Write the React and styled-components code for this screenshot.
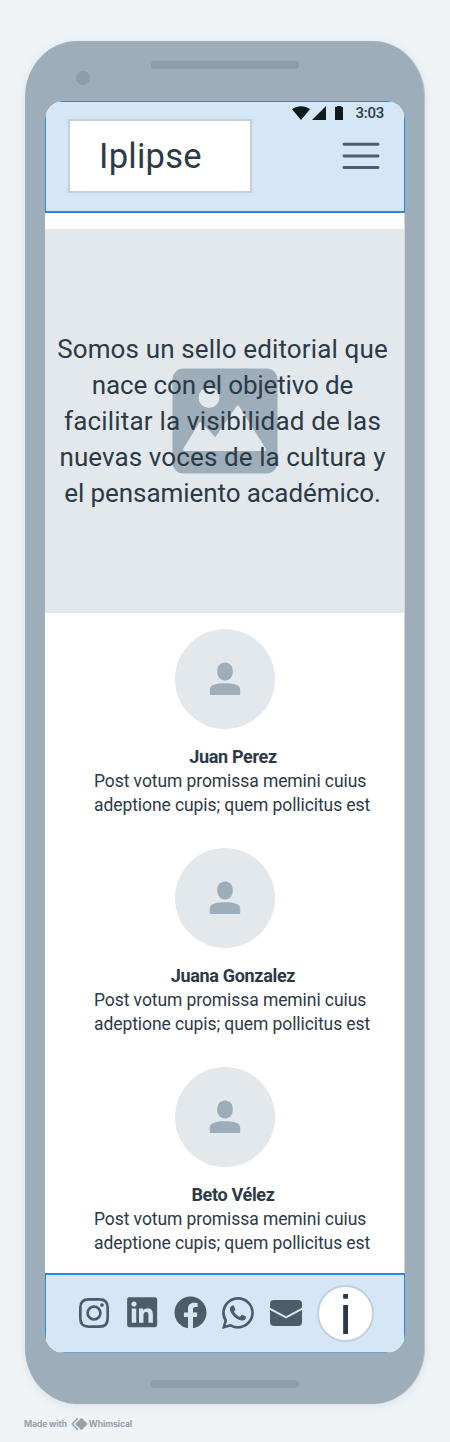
import React from 'react';
import styled, { createGlobalStyle } from 'styled-components';
import { FaLinkedin, FaFacebook } from 'react-icons/fa';
import { BsWhatsapp } from 'react-icons/bs';

const c = {
  page: '#eff3f6',
  device: '#9eadba',
  deviceDark: '#8d9dac',
  bar: '#d5e6f6',
  accent: '#2c88d9',
  line: '#c3cfd9',
  soft: '#e3e8ec',
  icon: '#4b5c6b',
  ink: '#2c3a47',
  status: '#0f1a20',
};

const GlobalStyle = createGlobalStyle`
  *, *::before, *::after { box-sizing: border-box; }
  body {
    margin: 0;
    background: ${c.page};
    color: ${c.ink};
    font-family: Roboto, "Liberation Sans", sans-serif;
  }
  svg { display: block; flex: none; }
`;

const Page = styled.div`
  width: 450px;
  height: 1442px;
  padding: 41px 25px 0;
  overflow: hidden;
`;

const Device = styled.main`
  display: flex;
  flex-direction: column;
  height: 1363px;
  padding: 0 20px;
  border-radius: 52px / 56px;
  background: ${c.device};
  box-shadow: inset -1px 0 rgba(255, 255, 255, 0.25), 0 2px 8px rgba(60, 80, 100, 0.1);
`;

const DeviceTop = styled.div`
  display: grid;
  grid-template-columns: 106px 148px 1fr;
  align-items: start;
  height: 60px;
  padding-top: 20px;
`;

const Camera = styled.span`
  width: 14px;
  height: 14px;
  margin: 10px 0 0 31px;
  border-radius: 50%;
  background: ${c.deviceDark};
`;

const Speaker = styled.span`
  width: 148px;
  height: 8px;
  border-radius: 4px;
  background: ${c.deviceDark};
`;

const DeviceBottom = styled.div`
  display: flex;
  justify-content: center;
  padding-top: 27px;
`;

const Screen = styled.div`
  display: flex;
  flex-direction: column;
  height: 1252px;
  border-radius: 19px;
  overflow: hidden;
  background: #fff;
`;

const Header = styled.header`
  display: flex;
  justify-content: space-between;
  height: 112px;
  padding: 0 20px 0 22px;
  border: 1px solid ${c.accent};
  border-bottom-width: 2px;
  background: ${c.bar};
`;

const Logo = styled.div`
  width: 184px;
  height: 74px;
  margin-top: 17px;
  padding-left: 29px;
  border: 2px solid ${c.line};
  background: #fff;
  font-size: 34.5px;
  line-height: 70px;
  letter-spacing: 0.25px;
`;

const HeaderSide = styled.div`
  display: flex;
  flex-direction: column;
  align-items: flex-end;
`;

const StatusBar = styled.div`
  display: flex;
  align-items: center;
  height: 22px;
  color: ${c.status};
`;

const Clock = styled.time`
  margin-left: 10px;
  color: ${c.ink};
  font-size: 15px;
  font-weight: 500;
  line-height: 22px;
  letter-spacing: -0.25px;
`;

const MenuButton = styled.button`
  margin: 18px 4px 0 0;
  padding: 0;
  border: 0;
  background: none;
  color: ${c.icon};
`;

const Content = styled.div`
  flex: 1;
  padding-top: 16px;
  border-right: 1px solid #d3dae0;
`;

const Hero = styled.section`
  display: grid;
  place-items: center;
  height: 384px;
  background: ${c.soft};
  > * { grid-area: 1 / 1; }
`;

const Headline = styled.p`
  margin: 0 4px 0 0;
  font-size: 26px;
  line-height: 36px;
  text-align: center;
  white-space: nowrap;
`;

const Line = styled.span`
  display: block;
  letter-spacing: ${(p) => p.$track}px;
`;

const People = styled.section`
  display: flex;
  flex-direction: column;
  gap: 31px;
  padding-top: 16px;
`;

const Person = styled.article`
  display: flex;
  flex-direction: column;
`;

const Avatar = styled.div`
  display: grid;
  place-items: center;
  width: 100px;
  height: 100px;
  margin: 0 0 16px 130px;
  padding-right: 1px;
  border-radius: 50%;
  background: ${c.soft};
  color: ${c.device};
`;

const Name = styled.h2`
  width: 280px;
  margin: 0 0 0 48px;
  font-size: 18px;
  font-weight: 700;
  line-height: 24px;
  letter-spacing: -0.32px;
  text-align: center;
`;

const Bio = styled.p`
  margin: 0 0 0 49px;
  font-size: 17.5px;
  line-height: 24px;
  letter-spacing: -0.08px;
  white-space: nowrap;
`;

const Footer = styled.footer`
  display: flex;
  align-items: center;
  height: 80px;
  padding-left: 24px;
  border: 1px solid ${c.accent};
  border-top-width: 2px;
  border-bottom-color: #7ba3ca;
  background: ${c.bar};
`;

const Social = styled.a`
  display: grid;
  place-items: center;
  width: 48px;
  height: 48px;
  padding-bottom: 2px;
  color: ${c.icon};
`;

const InfoButton = styled.button`
  display: grid;
  place-items: center;
  width: 57px;
  height: 57px;
  margin-left: 7px;
  padding: 3px 0 0;
  border: 2px solid ${c.line};
  border-radius: 50%;
  background: #fff;
  color: ${c.ink};
  font-family: "Liberation Sans", sans-serif;
  font-size: 55px;
  line-height: 50px;
`;

const Credit = styled.div`
  display: flex;
  align-items: center;
  height: 14px;
  margin: 13px 0 0 -1px;
  color: #95a2ae;
  font-family: Inter, sans-serif;
  font-size: 8.7px;
  font-weight: 700;
  line-height: 14px;
  letter-spacing: -0.15px;
  white-space: nowrap;
  svg { margin: 0 1px 0 4px; }
`;

const StatusIcons = () => (
  <svg width="53" height="16" viewBox="0 0 53 16" fill="currentColor">
    <path d="M9 15 0 4.2C5 .2 13 .2 18 4.2Z" />
    <path d="M34 1v14H20Z" />
    <path d="M43 2.300q0-.5.5-.5H45V1h4v.8h1.500q.5 0 .5.500V14.500q0 .5-.5.500h-7q-.5 0-.5-.500Z" />
  </svg>
);

const MenuIcon = () => (
  <svg width="38" height="28" viewBox="0 0 38 28" stroke="currentColor" strokeWidth="2.9" strokeLinecap="round">
    <path d="M2 2.300H36M2 14H36M2 25.500H36" />
  </svg>
);

const PictureIcon = () => (
  <svg width="106" height="106" viewBox="0 0 106 106">
    <rect x=".5" y=".5" width="105" height="105" rx="11" fill={c.device} />
    <circle cx="37" cy="29.700" r="10.400" fill={c.soft} />
    <path
      d="M12.500 81.500 28.500 55.500 43.500 71.500 65.800 39 92.500 81.500Z"
      fill={c.soft}
      stroke={c.soft}
      strokeWidth="3"
      strokeLinejoin="round"
    />
  </svg>
);

const PersonIcon = () => (
  <svg width="32" height="34" viewBox="0 0 32 34" fill="currentColor">
    <path d="M16 .5C21 .5 23.800 4 23.800 9.300S21 18.500 16 18.500 8.200 14.600 8.200 9.300 11 .5 16 .5Z" />
    <path d="M.8 32V27.500C.8 22.800 7 21.200 16 21.200S31.200 22.800 31.200 27.500V32Q31.200 33 30.200 33H1.800Q.8 33 .8 32Z" />
  </svg>
);

const InstagramIcon = () => (
  <svg width="30" height="30" viewBox="0 0 30 30" fill="none" stroke="currentColor" strokeWidth="2.700">
    <path d="M9.500 1.350H20.500C26 1.350 28.650 4 28.650 9.500V20.500C28.650 26 26 28.650 20.500 28.650H9.500C4 28.650 1.350 26 1.350 20.500V9.500C1.350 4 4 1.350 9.500 1.350Z" />
    <circle cx="15" cy="15" r="6.400" />
    <circle cx="23" cy="7" r="1.850" fill="currentColor" stroke="none" />
  </svg>
);

const MailIcon = () => (
  <svg width="32" height="26" viewBox="0 0 32 26" fill="currentColor">
    <path d="M0 7.700V4Q0 0 4 0H28Q32 0 32 4V7.700L16 16.200Z" />
    <path d="M0 9.900 16 18.400 32 9.900V22Q32 26 28 26H4Q0 26 0 22Z" />
  </svg>
);

const WhimsicalIcon = () => (
  <svg width="17" height="14" viewBox="0 0 17 14">
    <path d="M6.500 1.500 1.200 7 6.500 12.500" fill="none" stroke="currentColor" strokeWidth="1.500" strokeLinejoin="round" strokeLinecap="round" />
    <path d="M10.500 1.600 16 7 10.500 12.400 5 7Z" fill="currentColor" stroke="currentColor" strokeWidth="1.200" strokeLinejoin="round" />
  </svg>
);

const headline = [
  ['Somos un sello editorial que', 0.14],
  ['nace con el objetivo de', -0.14],
  ['facilitar la visibilidad de las', 0.18],
  ['nuevas voces de la cultura y', 0.1],
  ['el pensamiento académico.', -0.08],
];

const people = ['Juan Perez', 'Juana Gonzalez', 'Beto Vélez'];

export default function App() {
  return (
    <Page>
      <GlobalStyle />
      <Device>
        <DeviceTop>
          <Camera />
          <Speaker />
        </DeviceTop>
        <Screen>
          <Header>
            <Logo>Iplipse</Logo>
            <HeaderSide>
              <StatusBar>
                <StatusIcons />
                <Clock>3:03</Clock>
              </StatusBar>
              <MenuButton aria-label="Menú">
                <MenuIcon />
              </MenuButton>
            </HeaderSide>
          </Header>
          <Content>
            <Hero>
              <PictureIcon />
              <Headline>
                {headline.map(([text, track]) => (
                  <Line key={text} $track={track}>{text}</Line>
                ))}
              </Headline>
            </Hero>
            <People>
              {people.map((name) => (
                <Person key={name}>
                  <Avatar><PersonIcon /></Avatar>
                  <Name>{name}</Name>
                  <Bio>
                    Post votum promissa memini cuius<br />
                    adeptione cupis; quem pollicitus est
                  </Bio>
                </Person>
              ))}
            </People>
          </Content>
          <Footer>
            <Social><InstagramIcon /></Social>
            <Social><FaLinkedin size={34.3} /></Social>
            <Social><FaFacebook size={33} /></Social>
            <Social><BsWhatsapp size={32} /></Social>
            <Social><MailIcon /></Social>
            <InfoButton>i</InfoButton>
          </Footer>
        </Screen>
        <DeviceBottom>
          <Speaker />
        </DeviceBottom>
      </Device>
      <Credit>
        <span>Made with</span>
        <WhimsicalIcon />
        <span>Whimsical</span>
      </Credit>
    </Page>
  );
}
